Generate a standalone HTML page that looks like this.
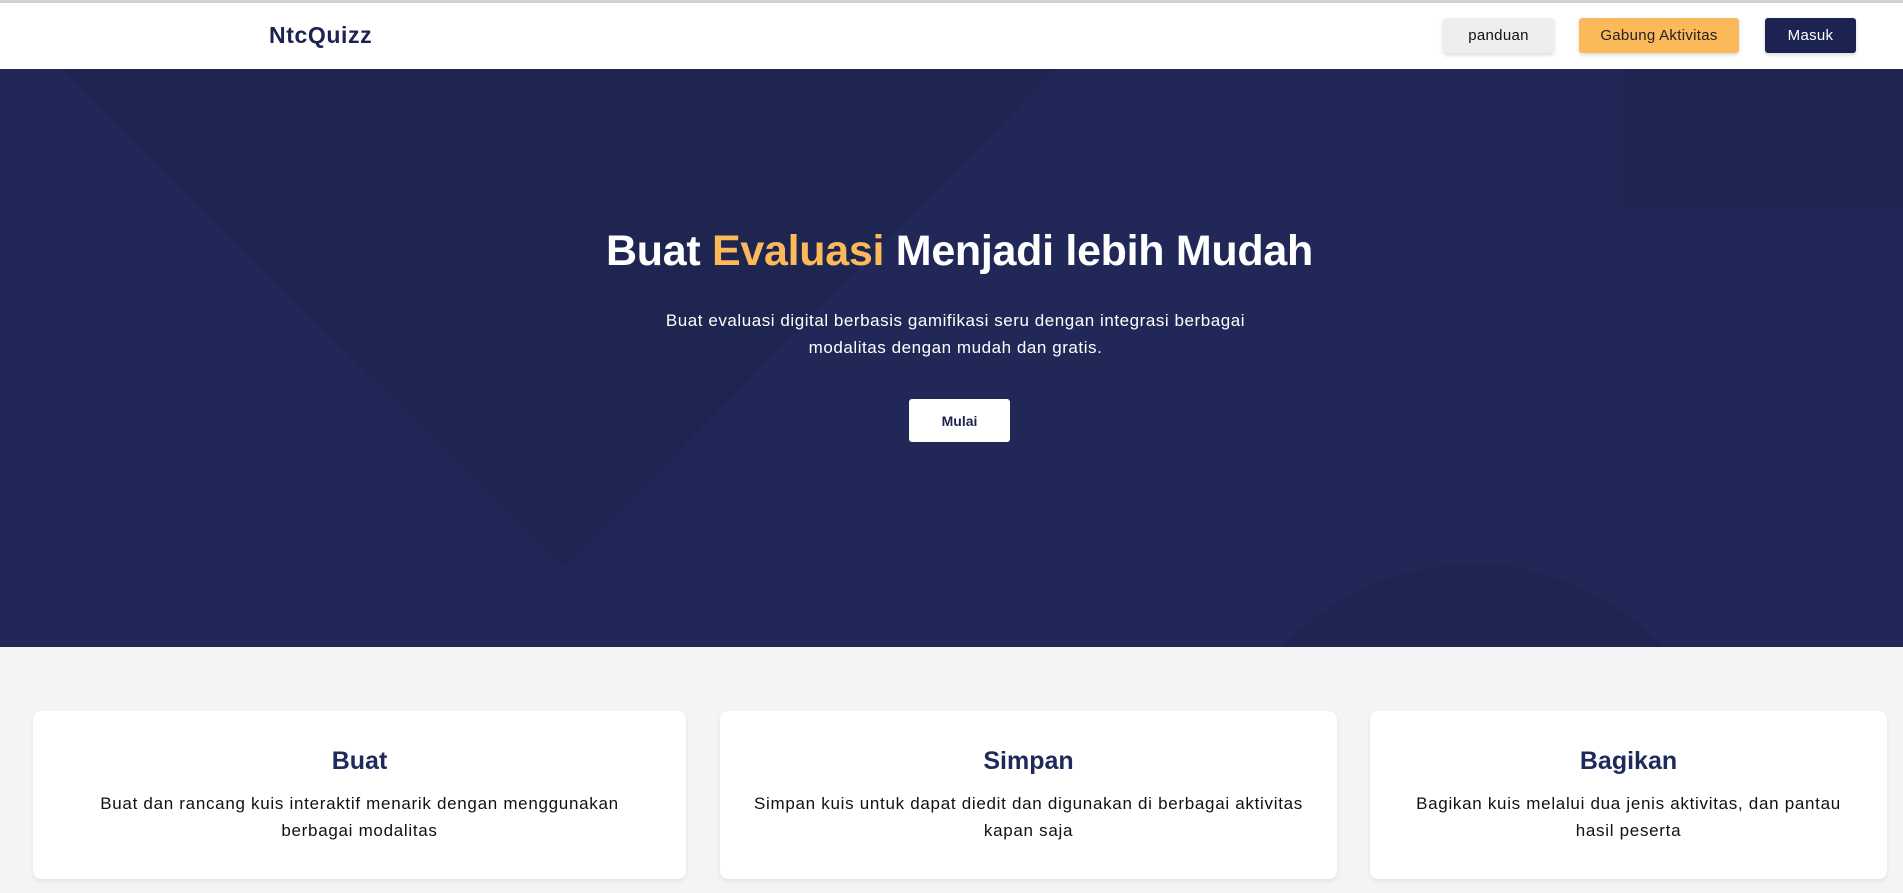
<!DOCTYPE html>
<html><head><meta charset="utf-8"><style>
*{margin:0;padding:0;box-sizing:border-box}
html,body{width:1903px;height:893px;overflow:hidden}
body{background:#f4f4f4;font-family:"Liberation Sans",sans-serif;position:relative}
.topline{position:absolute;left:0;top:0;width:1903px;height:3px;background:#cfcfcf}
header{position:absolute;top:3px;left:0;width:1903px;height:66px;background:#fff}
.logo{position:absolute;left:269px;top:19px;font-size:23px;font-weight:bold;color:#1d2350;letter-spacing:0.6px}
.btn{position:absolute;top:15px;height:35px;border-radius:3px;font-size:15px;display:flex;align-items:center;justify-content:center;box-shadow:0 2px 4px rgba(0,0,0,.15);letter-spacing:0.3px}
.hero{position:absolute;top:69px;left:0;width:1903px;height:578px;background:#212858;overflow:hidden}
h1{position:absolute;top:158px;left:0;width:1903px;text-align:center;color:#fff;font-size:43px;font-weight:bold;letter-spacing:-0.3px;padding-left:16px}
.sub{position:absolute;top:238px;left:0;width:1903px;text-align:center;color:#fff;font-size:17px;line-height:27px;letter-spacing:0.55px;padding-left:8px}
.mulai{position:absolute;left:909px;top:330px;width:101px;height:43px;background:#fff;border-radius:3px;color:#1d2350;font-weight:bold;font-size:14px;display:flex;align-items:center;justify-content:center}
.card{position:absolute;top:711px;height:168px;background:#fff;border-radius:8px;box-shadow:0 2px 5px rgba(0,0,0,.08);text-align:center}
.card h2{margin-top:36px;font-size:25px;color:#1f2a5a}
.card p{margin-top:14px;font-size:17px;line-height:27px;color:#111;letter-spacing:0.7px;white-space:nowrap}
</style></head><body>
<div class="topline"></div>
<header>
<div class="logo">NtcQuizz</div>
<div class="btn" style="left:1443px;width:111px;background:#eeeeee;color:#111">panduan</div>
<div class="btn" style="left:1579px;width:160px;background:#fbb95a;color:#222">Gabung Aktivitas</div>
<div class="btn" style="left:1765px;width:91px;background:#1d2350;color:#fff">Masuk</div>
</header>
<div class="hero">
<svg width="1903" height="578" style="position:absolute;left:0;top:0">
<polygon points="61,0 1056,0 564,499" fill="#1d2550"/>
<rect x="1624" y="0" width="279" height="139" fill="#1d2550"/>
<ellipse cx="1473" cy="830" rx="290" ry="335" fill="#1d2550"/>
</svg>
<h1>Buat <span style="color:#fbb95a">Evaluasi</span> Menjadi lebih Mudah</h1>
<div class="sub">Buat evaluasi digital berbasis gamifikasi seru dengan integrasi berbagai<br>modalitas dengan mudah dan gratis.</div>
<div class="mulai">Mulai</div>
</div>
<div class="card" style="left:33px;width:653px"><h2>Buat</h2><p>Buat dan rancang kuis interaktif menarik dengan menggunakan<br>berbagai modalitas</p></div>
<div class="card" style="left:720px;width:617px"><h2>Simpan</h2><p>Simpan kuis untuk dapat diedit dan digunakan di berbagai aktivitas<br>kapan saja</p></div>
<div class="card" style="left:1370px;width:517px"><h2>Bagikan</h2><p>Bagikan kuis melalui dua jenis aktivitas, dan pantau<br>hasil peserta</p></div>
</body></html>
